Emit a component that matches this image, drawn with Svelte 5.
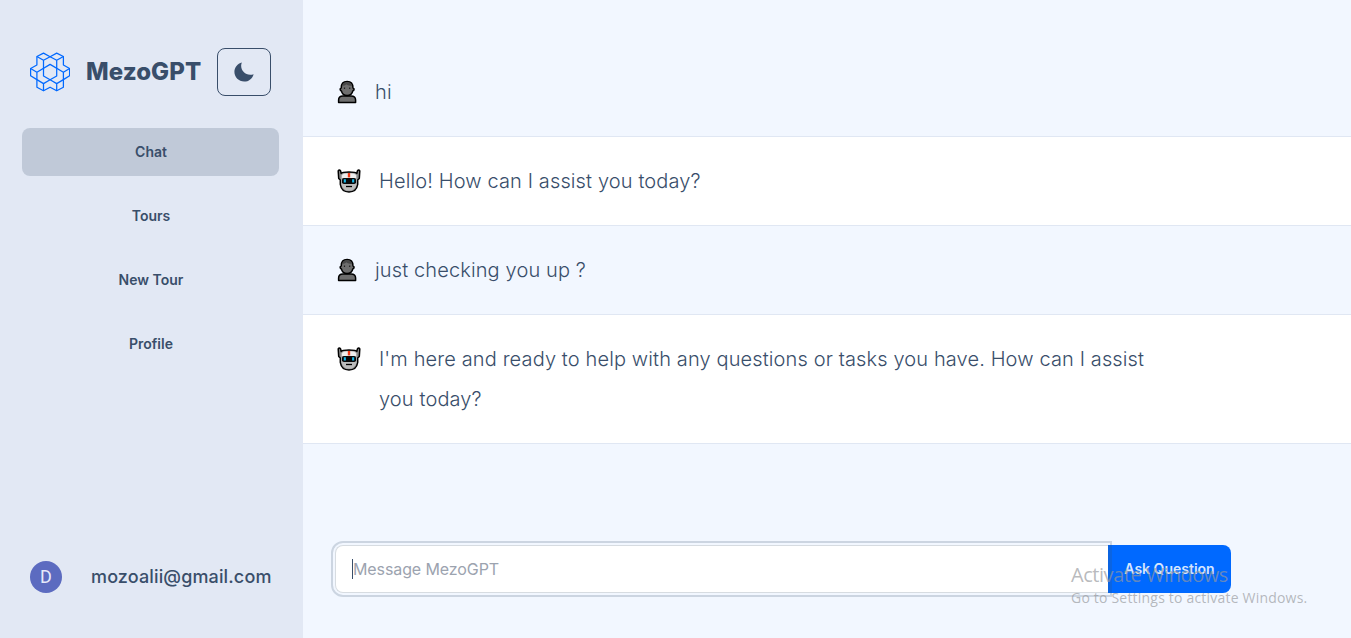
<script>
  const links = ['Chat', 'Tours', 'New Tour', 'Profile'];
  const messages = [
    { role: 'user', content: 'hi' },
    { role: 'assistant', content: 'Hello! How can I assist you today?' },
    { role: 'user', content: 'just checking you up ?' },
    {
      role: 'assistant',
      content: "I'm here and ready to help with any questions or tasks you have. How can I assist you today?"
    }
  ];
</script>

<div class="layout">
  <aside>
    <header>
      <svg class="logo" viewBox="0 0 40 40" fill="none" stroke="#0069ff" stroke-width="1.25" stroke-linejoin="round">
        <path d="M6.900 4.500 13.500 1.100 20.100 4.700 26.700 1.100 33.400 4.500V13L39.600 16.500V23.700L33.400 27.600V35.300L26.700 38.800 20.100 35.200 13.500 38.800 6.900 35.300V27.600L.6 23.700V16.500L6.900 13Z" />
        <path d="M6.900 4.500 13.500 8.300 20.100 4.700 26.700 8.300 33.400 4.500M13.500 8.300V24L20.100 27.800 26.700 24V8.300" />
        <path d="M.6 16.500 6.900 20.200 20.100 12.400 33.400 20.200 39.600 16.500M6.900 20.200V27.600L13.500 31.600 20.100 27.800 26.700 31.600 33.400 27.600V20.200M13.500 31.600V38.800M26.700 31.600V38.800" />
      </svg>
      <h2>MezoGPT</h2>
      <button class="theme" aria-label="Toggle theme">
        <svg viewBox="0 0 512 512" fill="currentColor"><path d="M195 125c0-26.300 5.300-51.300 14.900-74.100C118.700 73 51 155.100 51 253c0 114.800 93.200 208 208 208 97.900 0 180-67.700 202.100-158.900-22.800 9.600-47.900 14.900-74.100 14.900-106 0-192-86-192-192z" /></svg>
      </button>
    </header>
    <nav>
      {#each links as link, i}
        <a href="#{i}" class:active={i === 0}>{link}</a>
      {/each}
    </nav>
    <footer>
      <span class="avatar">D</span>
      <p>mozoalii@gmail.com</p>
    </footer>
  </aside>

  <main>
    <div class="messages">
      {#each messages as message}
        <div class="message" class:bot={message.role === 'assistant'}>
          {#if message.role === 'user'}
            <svg class="user-icon" viewBox="0 0 20 24" stroke="#000" stroke-width="1.5" stroke-linejoin="round">
              <path d="M1.600 22.500V20Q1.600 16 6 16H14Q18.600 16 18.600 20V22.500Z" fill="#6e6e6e" />
              <path d="M4.200 8C4.200 4 6.500 1.500 10.100 1.500S16 4 16 8C17.600 8.200 17.300 10.600 15.800 10.900 15.200 13.900 12.800 15.600 10.100 15.600S5 13.900 4.400 10.900C2.900 10.600 2.600 8.200 4.200 8Z" fill="#6e6e6e" />
              <path d="M5 5.800C7.200 5.800 8.400 5.200 9.200 4.200 10.500 5.300 12.800 5.700 15.200 5.800 14.500 3.500 13 2.200 10.100 2.200S5.600 3.500 5 5.800Z" fill="#484848" stroke="none" />
              <path d="M7.500 7.500V9M12.700 7.500V9" stroke="#222" stroke-width="1.200" />
            </svg>
          {:else}
            <svg class="bot-icon" viewBox="0 0 24 24" stroke-linejoin="round">
              <path d="M1.200 2Q2.300 .2 3.600 2L4.200 4.500Q5 3 12 3T19.800 4.500L20.400 2Q21.700 .2 22.800 2L22.300 9.500 20.700 11V15.500Q19.500 23 12 23T3.300 15.500V11L1.700 9.500Z" fill="#8a8a8a" stroke="#000" stroke-width="1.500" />
              <path d="M4.500 6Q5 4 12 4T19.500 6L19.600 15.500Q18 21.800 12 21.800T4.400 15.500Z" fill="#bcbcbc" />
              <path d="M5 6.500Q6 4.200 12 4.200T19 6.500L19.200 9H4.800Z" fill="#eee" />
              <path d="M10.800 4H13.200V8.400H10.800Z" fill="#f03a17" />
              <rect x="5" y="9" width="14" height="6" rx="1.800" fill="#08090a" />
              <path d="M6.800 10.300H8.900V13.600H6.800ZM15.100 10.300H17.200V13.600H15.100Z" fill="#18b9e9" />
              <path d="M9 17.500H15" stroke="#000" stroke-width="1.300" />
            </svg>
          {/if}
          <p>{message.content}</p>
        </div>
      {/each}
    </div>
    <form>
      <div class="field"><span class="caret"></span>Message MezoGPT</div>
      <button type="button" class="ask">Ask Question</button>
    </form>
  </main>

  <div class="watermark">
    <div class="wm-title">Activate Windows</div>
    <div class="wm-text">Go to Settings to activate Windows.</div>
  </div>
</div>

<style>
  :global(body) { overflow: hidden; }
  * { box-sizing: border-box; }
  p, h2 { margin: 0; }
  .layout {
    display: grid;
    grid-template-columns: 303px 1fr;
    height: 638px;
    position: relative;
    font-family: Inter, sans-serif;
    color: #394e6a;
    background: #f2f7ff;
  }
  aside {
    display: flex;
    flex-direction: column;
    background: #e2e8f4;
    padding: 48px 24px 45px 22px;
  }
  header { display: flex; align-items: center; height: 48px; padding-left: 8px; }
  .logo { width: 40px; height: 40px; }
  h2 { width: 115px; margin: 0 16px; font-size: 24px; line-height: 32px; font-weight: 800; letter-spacing: .08px; white-space: nowrap; }
  .theme {
    display: grid;
    place-items: center;
    width: 54px;
    height: 48px;
    padding: 0;
    border: 1px solid #394e6a;
    border-radius: 8px;
    background: none;
    color: #394e6a;
  }
  .theme svg { width: 24px; height: 24px; margin-right: 1px; }
  nav { display: flex; flex-direction: column; gap: 16px; margin-top: 32px; }
  nav a {
    height: 48px;
    line-height: 48px;
    padding-left: 1px;
    border-radius: 8px;
    text-align: center;
    text-decoration: none;
    color: #394e6a;
    font-size: 14px;
    font-weight: 600;
  }
  nav .active { background: #c0c9d8; }
  footer { display: flex; align-items: center; margin-top: auto; padding-left: 8px; }
  .avatar {
    width: 32px;
    height: 32px;
    margin-right: 29px;
    border-radius: 50%;
    background: #5c6bc0;
    color: #e6e9fa;
    font: 18px/32px Roboto, sans-serif;
    text-align: center;
  }
  footer p { padding-bottom: 2px; font-size: 18px; font-weight: 500; letter-spacing: .14px; white-space: nowrap; }
  main { display: flex; flex-direction: column; justify-content: space-between; padding: 48px 0 45px; }
  .message {
    display: flex;
    padding: 24px 32px;
    border-bottom: 1px solid #e0e7f3;
    font-size: 20px;
    line-height: 40px;
    font-weight: 300;
    letter-spacing: .125px;
  }
  .bot { background: #fff; }
  .message p { max-width: 768px; }
  .user-icon { width: 20px; height: 24px; margin: 8px 18px 0 2px; }
  .bot-icon { width: 24px; height: 24px; margin: 8px 18px 0 2px; }
  form { display: flex; width: 896px; height: 48px; margin-left: 32px; }
  .field {
    position: relative;
    z-index: 1;
    display: flex;
    align-items: center;
    flex: 1;
    padding-left: 17px;
    border: 1px solid #d7dce1;
    border-right: 0;
    border-radius: 8px 0 0 8px;
    outline: 2px solid rgba(57, 78, 106, .2);
    outline-offset: 2px;
    background: #fff;
    color: #9ca3af;
    font-size: 16px;
    letter-spacing: -.1px;
  }
  .caret { width: 1px; height: 20px; margin-left: -1px; background: #394e6a; }
  .ask {
    position: relative;
    z-index: 1;
    width: 123px;
    padding: 0 0 2px;
    border: 0;
    border-radius: 0 8px 8px 0;
    background: linear-gradient(90deg, #0b64e1 4px, #0069ff 4px);
    color: #d6e6ff;
    font: 600 14px Inter, sans-serif;
  }
  .watermark {
    position: absolute;
    z-index: 2;
    left: 1071px;
    top: 562px;
    white-space: nowrap;
    font-family: "Open Sans", sans-serif;
    color: rgba(150, 152, 156, .68);
  }
  .wm-title { font-size: 20px; line-height: 26px; letter-spacing: -.45px; }
  .wm-text { font-size: 14px; line-height: 20px; letter-spacing: .2px; }
</style>
